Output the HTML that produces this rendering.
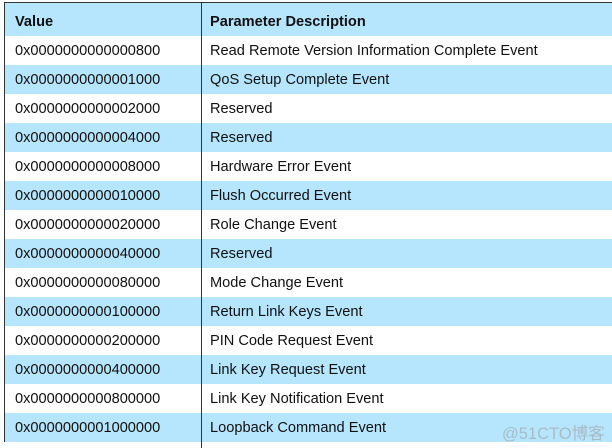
<!DOCTYPE html>
<html><head><style>
body{margin:0;width:612px;height:448px;overflow:hidden;background:#fff;font-family:"Liberation Sans",Arial,sans-serif;font-size:14.6px;color:#111;position:relative}
.t{position:absolute;left:4px;top:2px;width:640px;border-left:1px solid #333;border-top:1px solid #333}
.r{height:29px;position:relative}
.r.b{background:#b6e6fd}
.r span{position:absolute;top:7px}
.c1{left:10px}.c2{left:205px}
.d{position:absolute;left:201px;top:2px;width:1px;height:446px;background:#333}
.h{height:33px;background:#b6e6fd;font-weight:bold}
.h span{top:11px}
.wm{position:absolute;left:502px;top:420px;color:#a8bcc6;font-size:16.5px;font-family:"Liberation Sans","Noto Sans CJK SC",sans-serif}
</style></head><body>
<div class="t">
<div class="r h"><span class="c1">Value</span><span class="c2">Parameter Description</span></div>
<div class="r"><span class="c1">0x0000000000000800</span><span class="c2">Read Remote Version Information Complete Event</span></div>
<div class="r b"><span class="c1">0x0000000000001000</span><span class="c2">QoS Setup Complete Event</span></div>
<div class="r"><span class="c1">0x0000000000002000</span><span class="c2">Reserved</span></div>
<div class="r b"><span class="c1">0x0000000000004000</span><span class="c2">Reserved</span></div>
<div class="r"><span class="c1">0x0000000000008000</span><span class="c2">Hardware Error Event</span></div>
<div class="r b"><span class="c1">0x0000000000010000</span><span class="c2">Flush Occurred Event</span></div>
<div class="r"><span class="c1">0x0000000000020000</span><span class="c2">Role Change Event</span></div>
<div class="r b"><span class="c1">0x0000000000040000</span><span class="c2">Reserved</span></div>
<div class="r"><span class="c1">0x0000000000080000</span><span class="c2">Mode Change Event</span></div>
<div class="r b"><span class="c1">0x0000000000100000</span><span class="c2">Return Link Keys Event</span></div>
<div class="r"><span class="c1">0x0000000000200000</span><span class="c2">PIN Code Request Event</span></div>
<div class="r b"><span class="c1">0x0000000000400000</span><span class="c2">Link Key Request Event</span></div>
<div class="r"><span class="c1">0x0000000000800000</span><span class="c2">Link Key Notification Event</span></div>
<div class="r b"><span class="c1">0x0000000001000000</span><span class="c2">Loopback Command Event</span></div>
</div>
<div class="d"></div>
<div class="wm">@51CTO博客</div>
</body></html>
